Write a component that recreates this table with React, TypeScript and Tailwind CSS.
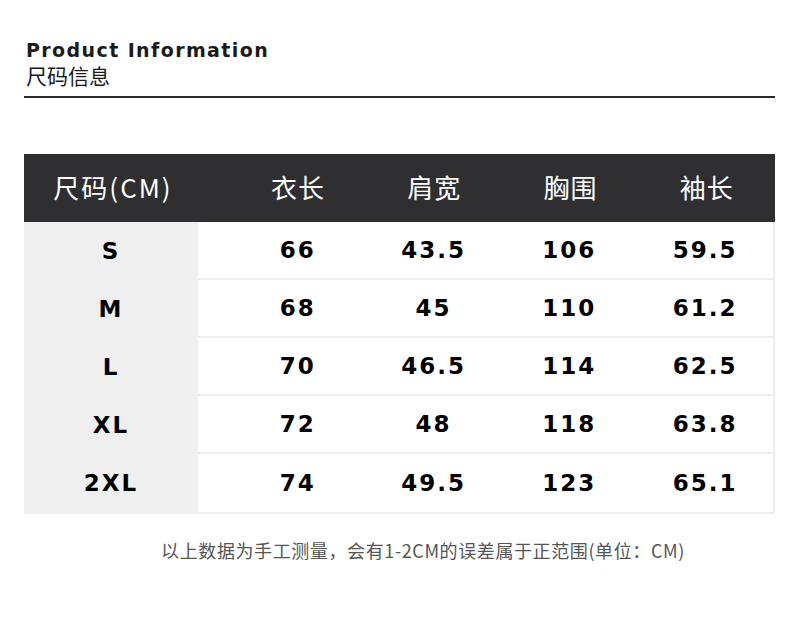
const rows = [
  { size: 'S', v: ['66', '43.5', '106', '59.5'] },
  { size: 'M', v: ['68', '45', '110', '61.2'] },
  { size: 'L', v: ['70', '46.5', '114', '62.5'] },
  { size: 'XL', v: ['72', '48', '118', '63.8'] },
  { size: '2XL', v: ['74', '49.5', '123', '65.1'] },
];

const cols = ['衣长', '肩宽', '胸围', '袖长'];

const cjk = { fontFamily: '"Noto Sans CJK SC", "DejaVu Sans", sans-serif' };
const wide = { fontFamily: '"DejaVu Sans", "Liberation Sans", sans-serif' };

export default function App() {
  return (
    <div className="w-[800px] h-[621px] bg-white overflow-hidden">
      <div className="px-6 pt-[38px]">
        <div className="pl-[2px] text-[19px] font-bold leading-[24px] text-[#1a1a1a] tracking-[1.4px]" style={wide}>
          Product Information
        </div>
        <div className="pl-[2px] text-[21px] leading-[26px] text-[#1a1a1a]" style={cjk}>
          尺码信息
        </div>
        <div className="mt-[8px] h-[2px] w-[751px] bg-[#2a2a2a]" />
      </div>

      <div className="mt-[56px] mx-6 w-[751px]">
        <div className="flex h-[68px] bg-[#2f2f31] text-white text-[26px] tracking-[1px]" style={cjk}>
          <div className="w-[174px] flex items-center justify-center pl-[4px] pb-[3px] tracking-[2px]">尺码(CM)</div>
          <div className="flex-1 pl-[32px] grid grid-cols-4">
            {cols.map((c) => (
              <div key={c} className="flex items-center justify-center pb-[3px]">{c}</div>
            ))}
          </div>
        </div>
        <div className="border-r-2 border-b-2 border-[#eeeeee]">
          {rows.map((r, i) => (
            <div key={r.size} className="flex h-[58px] text-[23px] font-bold tracking-[2px] text-black" style={wide}>
              <div className="w-[174px] bg-[#efefef] flex items-center justify-center">{r.size}</div>
              <div className={`flex-1 pl-[32px] grid grid-cols-4 ${i < rows.length - 1 ? 'border-b-2 border-[#eeeeee]' : ''}`}>
                {r.v.map((v, j) => (
                  <div key={j} className="flex items-center justify-center">{v}</div>
                ))}
              </div>
            </div>
          ))}
        </div>
      </div>

      <div className="mt-[23px] text-center text-[18px] tracking-[0.6px] text-[#555555] pl-[46px]" style={cjk}>
        以上数据为手工测量，会有1-2CM的误差属于正范围(单位：CM)
      </div>
    </div>
  );
}
